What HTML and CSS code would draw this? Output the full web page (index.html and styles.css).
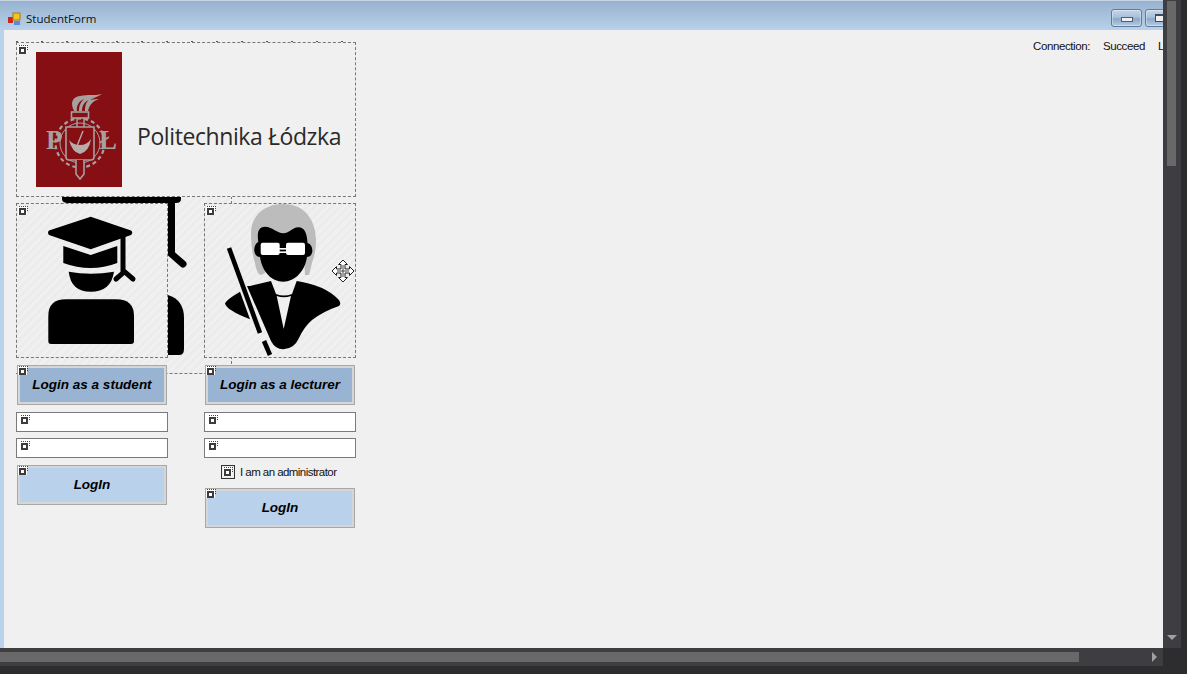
FILE: index.html
```html
<!DOCTYPE html>
<html lang="en">
<head>
    <meta charset="UTF-8">
    <meta name="viewport" content="width=device-width, initial-scale=1.0">
    <title>StudentForm</title>
    <link rel="stylesheet" href="styles.css">
</head>
<body>
    <svg class="defs" width="0" height="0">
        <symbol id="grip" viewBox="0 0 11 11">
            <rect x="0" y="1" width="9" height="9" fill="#fff"/>
            <rect x="1" y="3" width="7" height="7" fill="#3c3c3c"/>
            <rect x="3" y="5" width="3" height="3" fill="#fff"/>
            <path d="M1 1.5h1M3 1.5h1M5 1.5h1M7 1.5h1M9 1.5h1M9.5 3v1M9.5 5v1" stroke="#444" stroke-width="1" fill="none"/>
        </symbol>
    </svg>

    <div class="window">
        <header class="titlebar">
            <svg class="app-icon" width="14" height="14" viewBox="0 0 14 14">
                <rect x="0" y="5" width="5" height="6" fill="#c8281e"/>
                <rect x="5" y="1" width="7" height="7" fill="#f5c518" stroke="#a87c10"/>
                <rect x="6" y="9" width="6" height="4" fill="#5a8ad8"/>
            </svg>
            <span class="title-text">StudentForm</span>
            <div class="win-buttons">
                <div class="win-btn"><span class="min-mark"></span></div>
                <div class="win-btn"><span class="max-mark"></span></div>
            </div>
        </header>

        <div class="middle">
            <main class="canvas">
                <div class="hidden-label"></div>
                <div class="hidden-panel">
                    <svg class="hidden-pic" width="215" height="177" viewBox="0 0 215 177">
                        <path d="M46 1H165V3Q165 7 160 7H52Q46 7 46 3Z" fill="#000"/>
                        <path d="M155.5 5V58L167 68" stroke="#000" stroke-width="7" stroke-linecap="round" fill="none"/>
                        <path d="M150 99H152Q168 104 168 122V153Q168 159 163 159H150Z" fill="#000"/>
                    </svg>
                </div>

                <div class="form-grid">
                    <section class="logo-panel">
                        <svg class="grip grip-panel"><use href="#grip"/></svg>
                        <svg class="logo-mark" width="86" height="135" viewBox="0 0 86 135">
                            <rect width="86" height="135" fill="#860f14"/>
                            <g fill="none" stroke="#a89f9f">
                                <circle cx="44" cy="91" r="20" stroke-width="1"/>
                                <circle cx="44" cy="91" r="24.5" stroke-width="2.2" stroke-dasharray="4 3"/>
                            </g>
                            <path d="M38 59C34 51 36 45 44 44C52 42 58 44 66 42C61 45 57 46 54 48C58 47 61 47 63 47C58 49 54 51 52 59H49C49 54 50 50 53 48C48 50 46 54 46 59H43C43 53 45 50 48 47C43 49 40 54 41 59Z" fill="#a89f9f"/>
                            <rect x="35.5" y="60" width="17" height="6" fill="#860f14" stroke="#a89f9f" stroke-width="1.6"/>
                            <path d="M41 66V75M48 66V75" stroke="#a89f9f" stroke-width="1.5"/>
                            <path d="M30 75H58V105Q58 108 55 108H33Q30 108 30 105Z" fill="#860f14" stroke="#a89f9f" stroke-width="1.6"/>
                            <path d="M40 108V122L44 127L48 122V108" fill="#860f14" stroke="#a89f9f" stroke-width="1.6"/>
                            <path d="M33 88Q37 93 44 93Q51 93 55 87Q53 100 44 102Q36 100 33 88Z" fill="#b5acac"/>
                            <path d="M41 94L47 79" stroke="#b5acac" stroke-width="1.4"/>
                            <text class="logo-letter" x="10" y="97">P</text>
                            <text class="logo-letter" x="63" y="97">Ł</text>
                        </svg>
                        <span class="logo-text">Politechnika Łódzka</span>
                    </section>

                    <div class="col">
                        <div class="picture">
                            <svg class="grip grip-panel"><use href="#grip"/></svg>
                            <svg class="pic-svg" width="152" height="155" viewBox="0 0 152 155">
                                <path d="M74.7 13.7L115 27.5Q117.5 29.7 115 32L74.7 46.3L33 32Q31 29.7 33 27.5Z" fill="#000"/>
                                <path d="M47.3 43L74.7 52L101.3 43V60Q74.7 70 47.3 60Z" fill="#000"/>
                                <path d="M52.7 68.7Q74.7 73 98 68.7Q95 88.7 74.7 88.7Q55 88.7 52.7 68.7Z" fill="#000"/>
                                <path d="M32.3 113Q32.3 96.3 50 96.3H100Q118 96.3 118 113V138Q118 141 115 141H35Q32.3 141 32.3 138Z" fill="#000"/>
                                <path d="M107 33V68.7" stroke="#000" stroke-width="5" fill="none"/>
                                <path d="M100 76L108.5 68.7L117 76" stroke="#000" stroke-width="5" stroke-linecap="round" stroke-linejoin="round" fill="none"/>
                            </svg>
                        </div>
                        <button type="button" class="btn btn-dark">
                            <svg class="grip grip-btn"><use href="#grip"/></svg>Login as a student
                        </button>
                        <div class="field"><svg class="grip grip-field"><use href="#grip"/></svg></div>
                        <div class="field"><svg class="grip grip-field"><use href="#grip"/></svg></div>
                        <button type="button" class="btn btn-light">
                            <svg class="grip grip-btn"><use href="#grip"/></svg>LogIn
                        </button>
                    </div>

                    <div class="col">
                        <div class="picture">
                            <svg class="grip grip-panel"><use href="#grip"/></svg>
                            <svg class="pic-svg" width="152" height="155" viewBox="0 0 152 155">
                                <path d="M79.3 1C60 1 47 13 47 30C47 42 49 54 51 60C52 66 54 72 57 72L61 70L60 55H100L101 72H105L108 60C112 48 113 40 111 28C108 12 97 1 79.3 1Z" fill="#bcbcbc"/>
                                <path d="M61 23.7C69 24 73 30.3 79.3 30.3C86 30.3 88 24.3 94.3 24.3C101 24.3 103 31 103.5 40C108 41 109 47 108 50C107 53 105 54 103 54C101 68 91 78.7 79.3 78.7C67 78.7 58 68 56 54C53 54 51 52 50.3 48C50 43 52 40 54.3 39C53 30 54 24 61 23.7Z" fill="#000"/>
                                <rect x="56.7" y="39.7" width="19" height="12.3" rx="2" fill="#fff"/>
                                <rect x="82" y="39.7" width="19" height="12.3" rx="2" fill="#fff"/>
                                <rect x="75" y="45" width="8" height="1.6" fill="#fff"/>
                                <rect x="75" y="48.4" width="8" height="1.6" fill="#fff"/>
                                <path d="M21 100.3Q22 97 36 88.7L46 116.3Q22 107 21 100.3Z" fill="#000"/>
                                <path d="M46 83L67 78L72 91Q80 94 88 91L92.7 78Q120 82 134 96Q138 100 135 103Q120 108 108 117Q100 124 95 135Q90 146 79.3 146.3Q71 146 67 138L43 83Z" fill="#000"/>
                                <path d="M72.7 93Q80 95.5 87 93L79.7 126Z" fill="#f0f0f0"/>
                                <path d="M25 45L56 130" stroke="#000" stroke-width="4.6" fill="none"/>
                                <path d="M60 138L66 152" stroke="#000" stroke-width="4.6" fill="none"/>
                            </svg>
                            <svg class="move-cursor" width="24" height="24" viewBox="0 0 24 24">
                                <path d="M12 1L16.5 5.5H14V10H18.5V7.5L23 12L18.5 16.5V14H14V18.5H16.5L12 23L7.5 18.5H10V14H5.5V16.5L1 12L5.5 7.5V10H10V5.5H7.5Z" fill="#fff" stroke="#222" stroke-width="1"/>
                                <path d="M12 6V18M6 12H18" stroke="#444" stroke-width="1" fill="none"/>
                            </svg>
                        </div>
                        <button type="button" class="btn btn-dark">
                            <svg class="grip grip-btn"><use href="#grip"/></svg>Login as a lecturer
                        </button>
                        <div class="field"><svg class="grip grip-field"><use href="#grip"/></svg></div>
                        <div class="field"><svg class="grip grip-field"><use href="#grip"/></svg></div>
                        <label class="admin-check">
                            <span class="check-box"><svg class="grip grip-check"><use href="#grip"/></svg></span>
                            I am an administrator
                        </label>
                        <button type="button" class="btn btn-light btn-tight">
                            <svg class="grip grip-btn"><use href="#grip"/></svg>LogIn
                        </button>
                    </div>
                </div>

                <div class="status">
                    <span>Connection:</span>
                    <span>Succeed</span>
                    <span>L</span>
                </div>
            </main>

            <aside class="vscroll">
                <div class="vthumb"></div>
                <div class="vtrack"><span class="arrow-down"></span></div>
            </aside>
        </div>

        <footer class="hscroll">
            <div class="hbar">
                <div class="hthumb"></div>
                <span class="arrow-right"></span>
                <div class="corner"></div>
            </div>
        </footer>
    </div>
</body>
</html>
```

FILE: styles.css
```css
html, body {
    margin: 0;
    padding: 0;
    height: 100%;
    overflow: hidden;
    background-color: #2d2d30;
}
.defs {
    display: block;
    height: 0;
}
.window {
    width: 1187px;
    height: 674px;
    display: flex;
    flex-direction: column;
    font-family: "Liberation Sans", Arial, sans-serif;
}

/* title bar */
.titlebar {
    height: 30px;
    flex: none;
    display: flex;
    align-items: center;
    padding: 5px 0 0 8px;
    box-sizing: border-box;
    border-top: 1px solid #c6d4e4;
    background: linear-gradient(#97b2d0, #b9d1ea);
}
.app-icon {
    margin-right: 4px;
    margin-top: 1px;
}
.title-text {
    font-family: "Open Sans", sans-serif;
    font-size: 11.5px;
    color: #101010;
}
.win-buttons {
    margin-left: auto;
    display: flex;
    gap: 3px;
    width: 76px;
    align-self: flex-start;
    margin-top: 3px;
}
.win-btn {
    width: 29px;
    height: 16px;
    flex: none;
    border: 1px solid #5f7a9b;
    border-radius: 3px;
    display: flex;
    align-items: center;
    justify-content: center;
    background: linear-gradient(#c5d6e8 0, #a8c0da 45%, #8ba8c8 55%, #b5cbe2 100%);
    box-shadow: inset 0 0 0 1px rgba(255, 255, 255, .35);
}
.min-mark {
    width: 10px;
    height: 3px;
    margin-top: 3px;
    background-color: #f0f0f0;
    border: 1px solid #4f5d70;
}
.max-mark {
    width: 9px;
    height: 5px;
    background-color: #f0f0f0;
    border: 1px solid #3f4c5c;
    border-top-width: 2px;
}

/* middle */
.middle {
    flex: 1;
    display: flex;
    min-height: 0;
}
.canvas {
    flex: 1;
    position: relative;
    display: flex;
    align-items: flex-start;
    justify-content: space-between;
    box-sizing: border-box;
    background-color: #f0f0f0;
    border-left: 4px solid #b9d1ea;
    padding: 12px 0 0 12px;
    overflow: hidden;
}
.hidden-label {
    position: absolute;
    left: 12px;
    top: 11px;
    width: 341px;
    height: 1px;
    background-image: repeating-linear-gradient(90deg, #555 0 2px, transparent 2px 25px);
}
.hidden-panel {
    position: absolute;
    left: 12px;
    top: 166px;
    width: 215px;
    height: 177px;
    border-right: 1px dashed #777;
    border-bottom: 1px dashed #777;
    background-image: repeating-linear-gradient(135deg, #ececec 0 3px, #f0f0f0 3px 6px);
}
.hidden-pic {
    display: block;
}
.form-grid {
    position: relative;
    display: grid;
    grid-template-columns: 152px 152px;
    column-gap: 36px;
    row-gap: 6px;
    width: 340px;
}
.grip {
    position: absolute;
    width: 11px;
    height: 11px;
    z-index: 1;
}
.grip-panel {
    left: 1px;
    top: 1px;
}
.grip-btn {
    left: 0;
    top: -1px;
}
.grip-field {
    left: 3px;
    top: 1px;
}
.grip-check {
    left: 1px;
    top: 0;
}

/* logo */
.logo-panel {
    grid-column: 1 / 3;
    position: relative;
    height: 155px;
    box-sizing: border-box;
    border: 1px dashed #777;
    display: flex;
    align-items: center;
    padding-left: 19px;
    background-color: #f0f0f0;
}
.logo-mark {
    flex: none;
}
.logo-letter {
    font-family: "Liberation Serif", serif;
    font-weight: bold;
    font-size: 27px;
    fill: #a89f9f;
}
.logo-text {
    margin-left: 15px;
    margin-top: 33px;
    font-family: "Open Sans", sans-serif;
    font-size: 23px;
    letter-spacing: -.41px;
    color: #2a2a2a;
    white-space: nowrap;
}

/* columns */
.col {
    display: flex;
    flex-direction: column;
    position: relative;
}
.picture {
    position: relative;
    height: 155px;
    box-sizing: border-box;
    border: 1px dashed #777;
    background-color: #f0f0f0;
    background-image: repeating-linear-gradient(135deg, #ececec 0 3px, #f0f0f0 3px 6px);
}
.pic-svg {
    position: absolute;
    left: -1px;
    top: -1px;
}
.move-cursor {
    position: absolute;
    left: 126px;
    top: 55px;
}
.btn {
    position: relative;
    display: block;
    width: 150px;
    height: 40px;
    margin: 0 auto;
    padding: 0 0 1px;
    box-sizing: border-box;
    border: 1px solid #a8a8a8;
    box-shadow: inset 0 0 0 2px #d6d6d6;
    font-family: "Liberation Sans", Arial, sans-serif;
    font-size: 13.5px;
    font-weight: bold;
    font-style: italic;
    color: #000;
}
.btn-dark {
    margin-top: 7px;
    background-color: #98b4d2;
}
.btn-light {
    margin-top: 7px;
    background-color: #b9d1ea;
}
.btn-tight {
    margin-top: 9px;
}
.field {
    position: relative;
    height: 20px;
    margin-top: 6px;
    box-sizing: border-box;
    border: 1px solid #7a7a7a;
    background-color: #fff;
}
.btn + .field {
    margin-top: 7px;
}
.admin-check {
    display: flex;
    align-items: center;
    height: 14px;
    margin: 7px 0 0 17px;
    font-size: 11.5px;
    letter-spacing: -.55px;
    color: #111;
}
.check-box {
    position: relative;
    width: 12px;
    height: 12px;
    margin-right: 5px;
    border: 1px solid #333;
    background-color: #eee;
}

/* status labels */
.status {
    display: flex;
    gap: 13px;
    flex: none;
    width: 130px;
    box-sizing: border-box;
    margin-top: -2px;
    font-size: 11.5px;
    letter-spacing: -.4px;
    color: #111;
    white-space: nowrap;
    overflow: hidden;
}

/* scroll bars */
.vscroll {
    width: 24px;
    flex: none;
    display: flex;
    background-color: #2d2d30;
    margin-top: -30px;
    position: relative;
    background: linear-gradient(90deg, #3e3e42 0 18px, #2d2d30 18px);
}
.vthumb {
    position: absolute;
    left: 4px;
    top: 1px;
    width: 9px;
    height: 165px;
    background-color: #686868;
}
.vtrack {
    position: absolute;
    left: 0;
    bottom: 0;
    width: 18px;
    height: 20px;
}
.arrow-down {
    position: absolute;
    left: 4px;
    top: 7px;
    border-left: 5px solid transparent;
    border-right: 5px solid transparent;
    border-top: 5px solid #a0a0a0;
}
.hscroll {
    height: 26px;
    flex: none;
    background-color: #2d2d30;
}
.hbar {
    position: relative;
    height: 18px;
    background-color: #3e3e42;
    width: 1181px;
}
.hthumb {
    position: absolute;
    left: 0;
    top: 4px;
    width: 1079px;
    height: 10px;
    background-color: #686868;
}
.arrow-right {
    position: absolute;
    left: 1152px;
    top: 4px;
    border-top: 5px solid transparent;
    border-bottom: 5px solid transparent;
    border-left: 5px solid #a0a0a0;
}
.corner {
    position: absolute;
    left: 1163px;
    top: 0;
    width: 18px;
    height: 18px;
    background-color: #2d2d30;
}
```
